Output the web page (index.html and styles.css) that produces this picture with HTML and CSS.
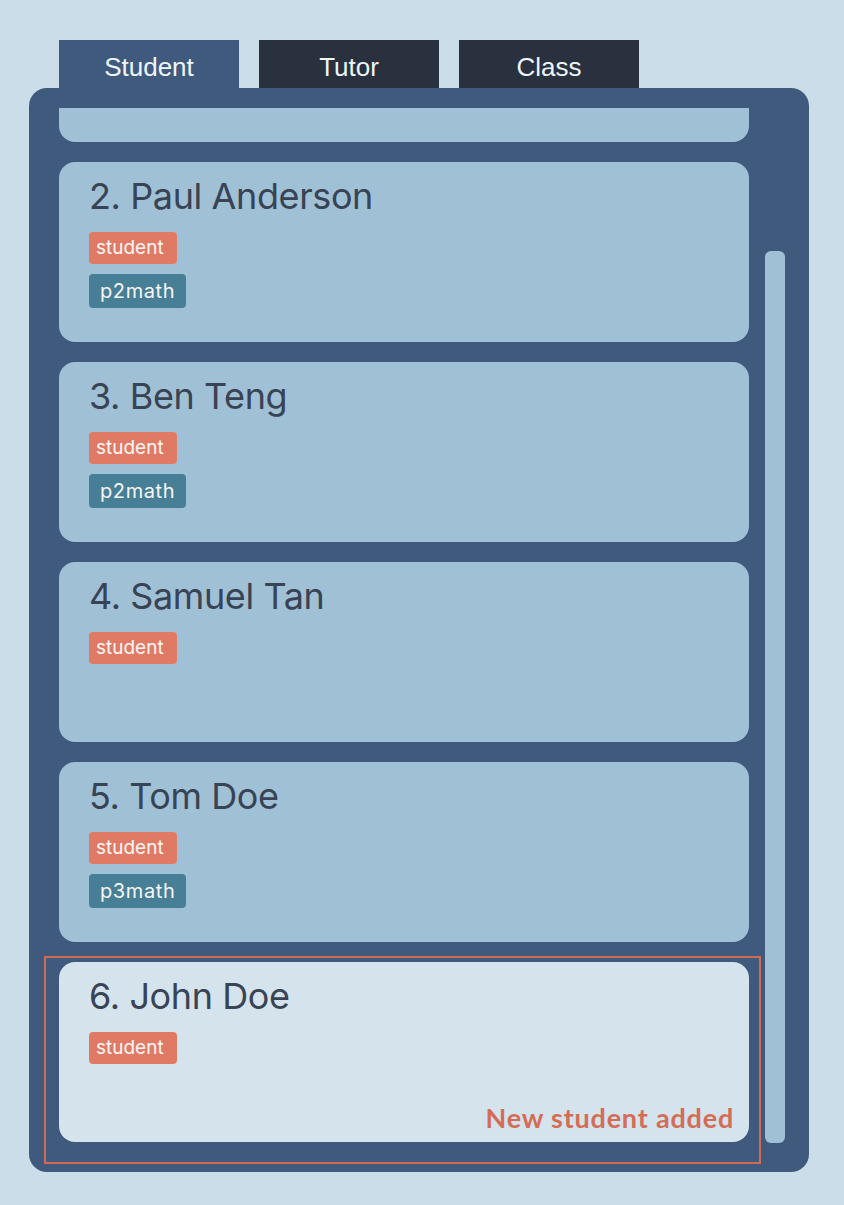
FILE: index.html
```html
<!DOCTYPE html>
<html lang="en">
<head>
<meta charset="utf-8">
<title>Students</title>
<link rel="stylesheet" href="styles.css">
</head>
<body>
<div class="app">
  <nav class="tabs">
    <div class="tab tab-active">Student</div>
    <div class="tab">Tutor</div>
    <div class="tab">Class</div>
  </nav>
  <main class="panel">
    <div class="list">
      <div class="card card-scrolled"></div>
      <div class="card">
        <div class="name">2. Paul Anderson</div>
        <div class="tags">
          <span class="tag tag-role">student</span>
          <span class="tag tag-class">p2math</span>
        </div>
      </div>
      <div class="card">
        <div class="name">3. Ben Teng</div>
        <div class="tags">
          <span class="tag tag-role">student</span>
          <span class="tag tag-class">p2math</span>
        </div>
      </div>
      <div class="card">
        <div class="name">4. Samuel Tan</div>
        <div class="tags">
          <span class="tag tag-role">student</span>
        </div>
      </div>
      <div class="card">
        <div class="name">5. Tom Doe</div>
        <div class="tags">
          <span class="tag tag-role">student</span>
          <span class="tag tag-class">p3math</span>
        </div>
      </div>
      <div class="highlight">
        <div class="card card-new">
          <div class="name">6. John Doe</div>
          <div class="tags">
            <span class="tag tag-role">student</span>
          </div>
          <div class="note">New student added</div>
        </div>
      </div>
    </div>
    <div class="scrollbar"><div class="thumb"></div></div>
  </main>
</div>
</body>
</html>
```

FILE: styles.css
```css
html, body {
  margin: 0;
  padding: 0;
}

body {
  background: #cbdde9;
  font-family: Inter, "Noto Sans", sans-serif;
  width: 844px;
  height: 1205px;
  overflow: hidden;
}

.app {
  padding: 40px 0 0 29px;
}

.tabs {
  display: flex;
  gap: 20px;
  padding-left: 30px;
}

.tab {
  width: 180px;
  height: 48px;
  background: #29303e;
  color: #eef6fb;
  font-family: "Liberation Sans", Arial, sans-serif;
  font-size: 26px;
  line-height: 54px;
  text-align: center;
}

.tab-active {
  background: #405a7d;
}

.panel {
  width: 780px;
  height: 1084px;
  box-sizing: border-box;
  background: #405a7d;
  border-radius: 18px;
  display: flex;
  padding: 20px 24px 0 30px;
  gap: 16px;
}

.list {
  width: 690px;
  display: flex;
  flex-direction: column;
  gap: 20px;
  overflow-x: visible;
  overflow-y: clip;
}

.card {
  box-sizing: border-box;
  height: 180px;
  flex: none;
  background: #a0c0d6;
  border-radius: 16px;
  padding: 12px 30px 0;
  position: relative;
}

.card-scrolled {
  margin-top: -146px;
}

.card-new {
  background: #d5e3ed;
}

.name {
  color: #384353;
  font-size: 36px;
  line-height: 44px;
  letter-spacing: -0.4px;
}

.tags {
  margin-top: 14px;
  display: flex;
  flex-direction: column;
  align-items: flex-start;
  gap: 10px;
}

.tag {
  height: 32px;
  line-height: 32px;
  border-radius: 4px;
  color: #f7f7f7;
  font-size: 19px;
}

.tag-role {
  background: #e07a64;
  padding: 0 13px 0 7px;
}

.tag-class {
  background: #477f96;
  padding: 0 11px;
  height: 34px;
  line-height: 34px;
  font-size: 20px;
  letter-spacing: 0.6px;
}

.highlight {
  position: relative;
  flex: none;
}

.highlight::before {
  content: "";
  position: absolute;
  top: -6px;
  left: -15px;
  right: -12px;
  bottom: -22px;
  border: 2px solid #d26a54;
  pointer-events: none;
}

.note {
  position: absolute;
  right: 15px;
  bottom: 9px;
  color: #d46d58;
  font-family: Lato, "Open Sans", sans-serif;
  font-weight: 700;
  font-size: 27px;
  line-height: 30px;
  letter-spacing: 0.8px;
}

.scrollbar {
  width: 20px;
  padding-top: 143px;
  box-sizing: border-box;
}

.thumb {
  height: 892px;
  background: #a0c0d6;
  border-radius: 6px;
}
```
